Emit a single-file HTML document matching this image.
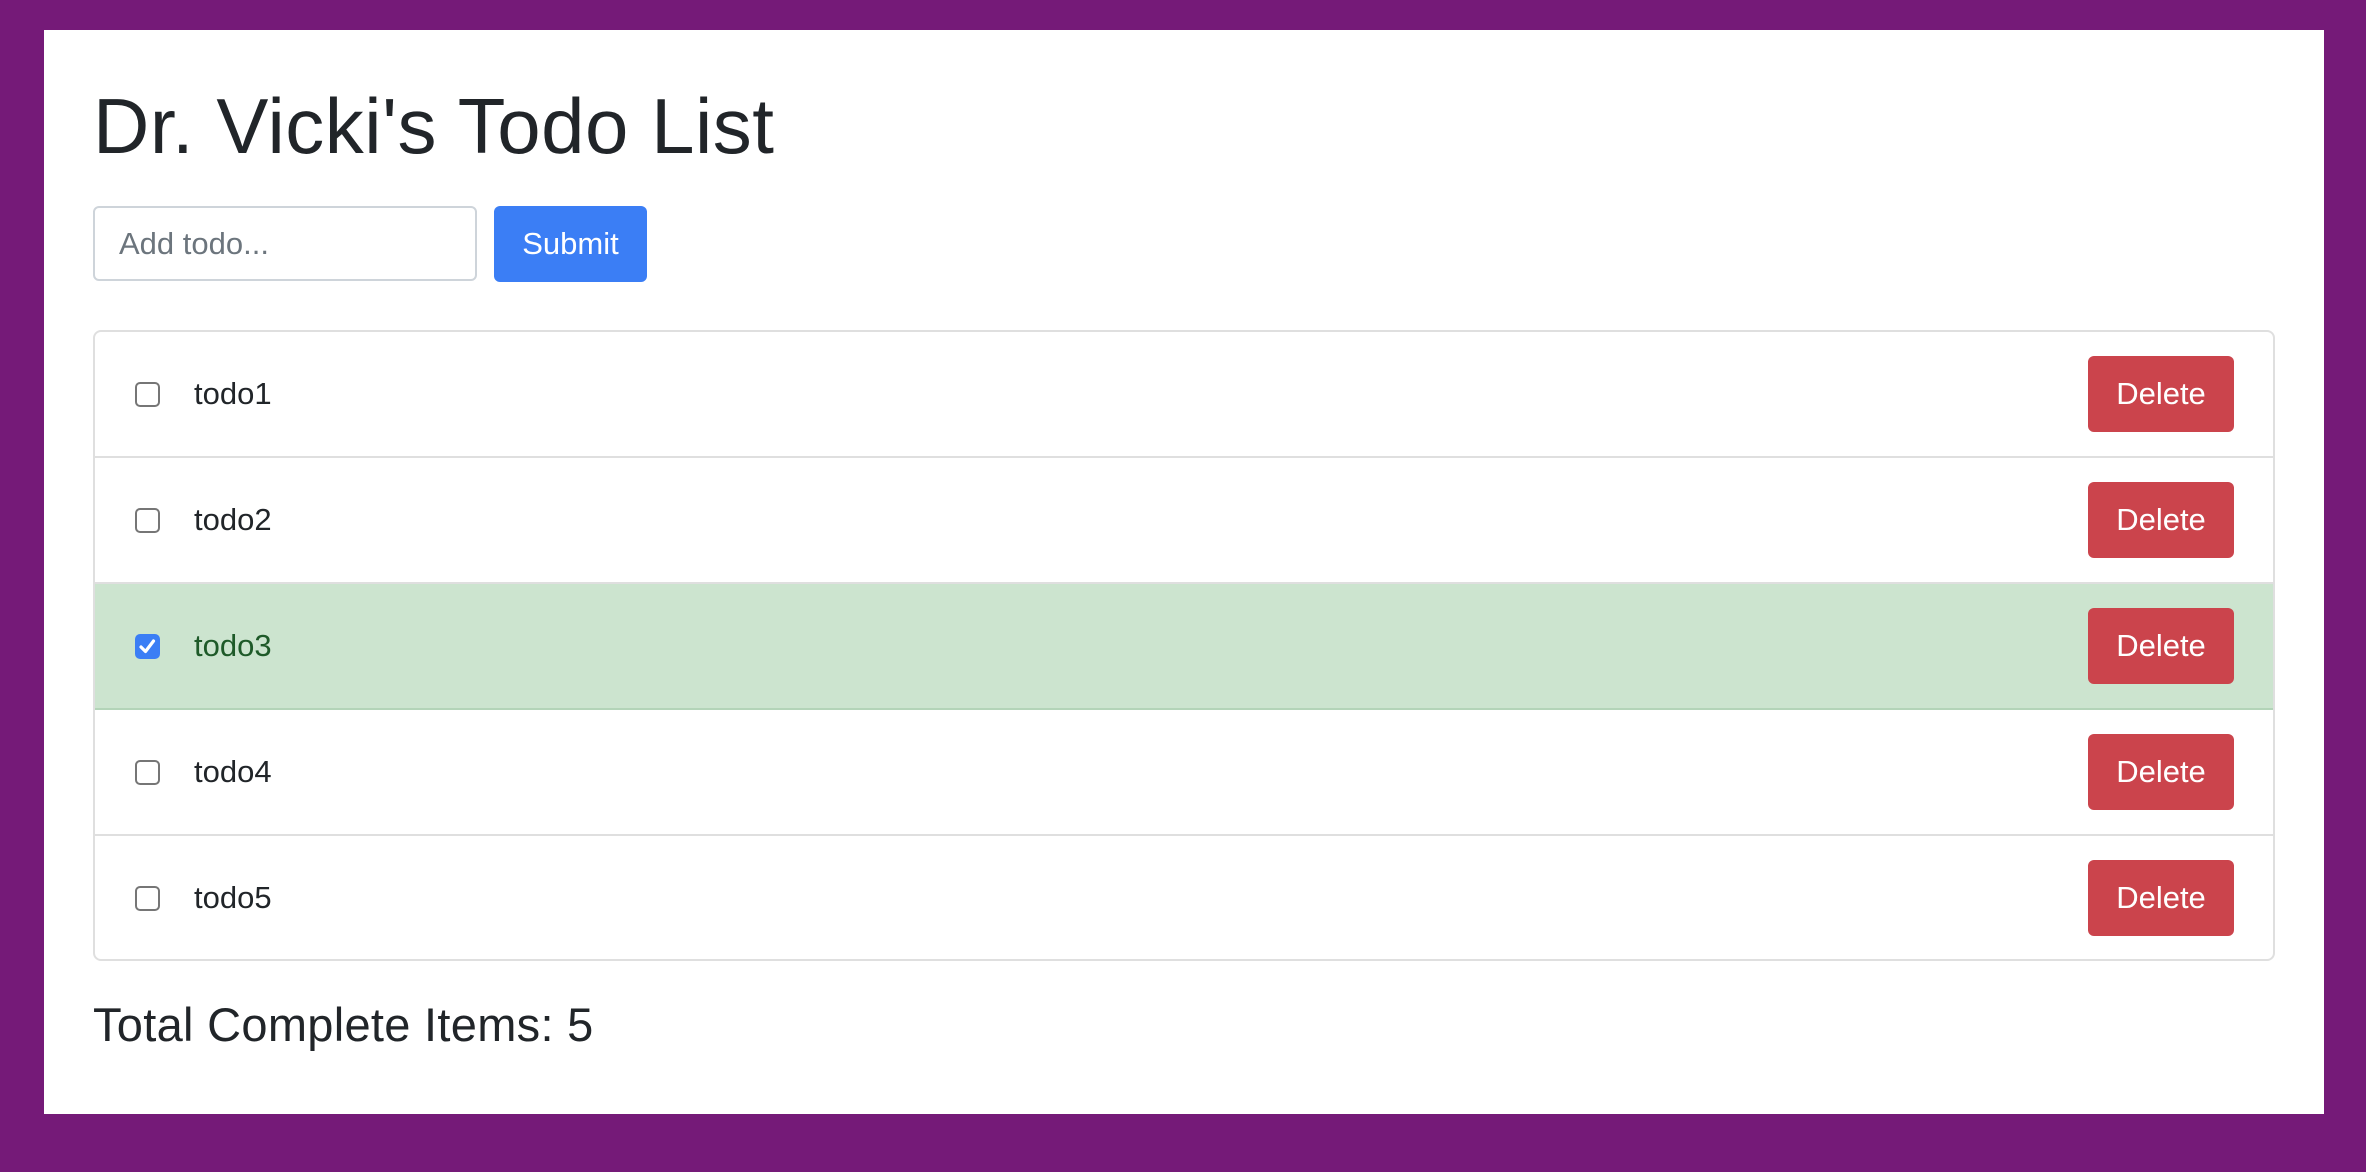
<!DOCTYPE html>
<html><head><meta charset="utf-8"><style>
html,body{margin:0;padding:0}
body{width:2366px;height:1172px;background:#751a78;position:relative;overflow:hidden;font-family:"Liberation Sans",Arial,sans-serif;color:#212529}
.panel{position:absolute;left:44px;top:30px;width:2280px;height:1084px;background:#fff}
h1{position:absolute;left:93px;top:76px;margin:0;font-size:78px;font-weight:400;line-height:100px;letter-spacing:0.5px;white-space:nowrap}
.input{position:absolute;left:93px;top:206px;border:2px solid #ced4da;border-radius:6px;box-sizing:border-box;width:384px;height:75px;font-size:31px;color:#6c757d;line-height:71px;padding-left:24px}
.submit{position:absolute;left:494px;top:206px;width:153px;height:76px;background:#3b7ef5;border-radius:6px;color:#fff;font-size:31px;line-height:76px;text-align:center}
.list{position:absolute;left:93px;top:330px;width:2182px;height:631px;border:2px solid #dfdfdf;border-radius:8px;box-sizing:border-box;overflow:hidden}
.row{position:absolute;left:0;right:0;height:126px;border-bottom:2px solid #dfdfdf;box-sizing:border-box}
.row.done{background:#cce4cf;border-bottom-color:#b3d4b8}
.cb{position:absolute;left:40px;top:50px;width:25px;height:25px;border:2px solid #767676;border-radius:5px;box-sizing:border-box;background:#fff}
.done .cb{background:#3b7ef5;border-color:#3b7ef5}
.txt{position:absolute;left:99px;top:0;line-height:124px;font-size:31px}
.done .txt{color:#1e5a29}
.del{position:absolute;left:1993px;top:24px;width:146px;height:76px;background:#cb444c;border-radius:6px;color:#fff;font-size:31px;line-height:76px;text-align:center}
.total{position:absolute;left:93px;top:990px;font-size:47px;line-height:70px;letter-spacing:0.3px;white-space:nowrap}
</style></head><body>
<div class="panel"></div>
<h1>Dr. Vicki's Todo List</h1>
<div class="input">Add todo...</div>
<div class="submit">Submit</div>
<div class="list">
<div class="row" style="top:0"><div class="cb"></div><div class="txt">todo1</div><div class="del">Delete</div></div>
<div class="row" style="top:126px"><div class="cb"></div><div class="txt">todo2</div><div class="del">Delete</div></div>
<div class="row done" style="top:252px"><div class="cb"><svg width="21" height="21" viewBox="0 0 21 21" style="position:absolute;left:0;top:0"><path d="M4 11 L8.5 15.5 L16.5 5" stroke="#fff" stroke-width="3.2" fill="none" stroke-linecap="round" stroke-linejoin="round"/></svg></div><div class="txt">todo3</div><div class="del">Delete</div></div>
<div class="row" style="top:378px"><div class="cb"></div><div class="txt">todo4</div><div class="del">Delete</div></div>
<div class="row" style="top:504px;border-bottom:none"><div class="cb"></div><div class="txt">todo5</div><div class="del">Delete</div></div>
</div>
<div class="total">Total Complete Items: 5</div>
</body></html>
